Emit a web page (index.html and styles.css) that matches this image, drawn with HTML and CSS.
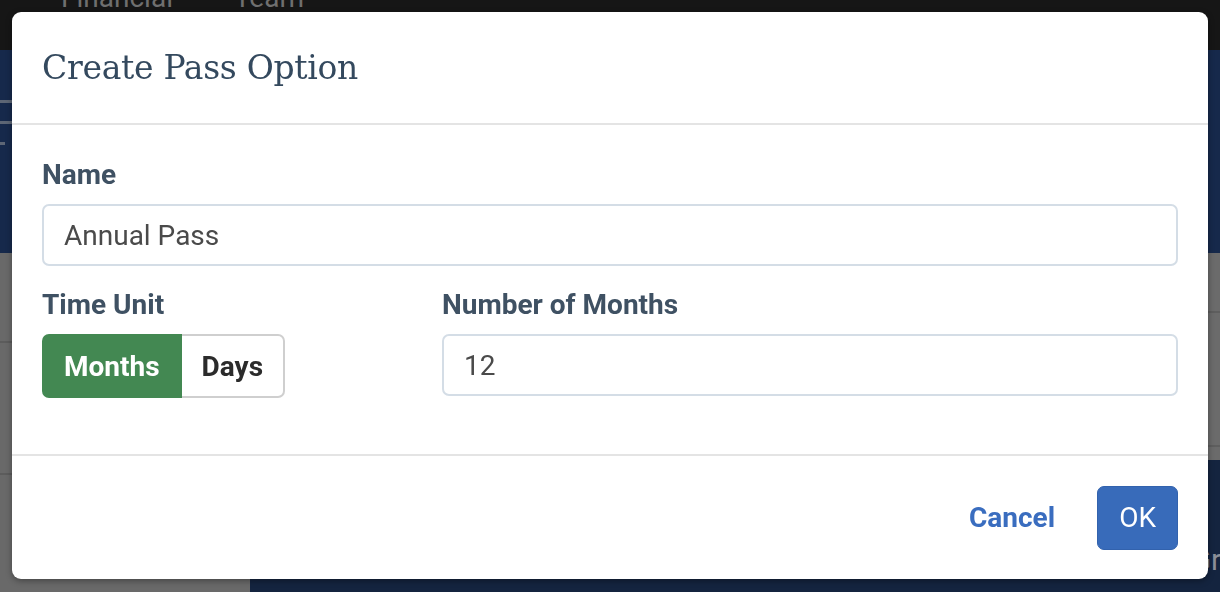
FILE: index.html
```html
<!DOCTYPE html>
<html lang="en">
<head>
<meta charset="utf-8">
<title>Create Pass Option</title>
<link rel="stylesheet" href="styles.css">
</head>
<body>
<div class="page">
  <div class="topbar">
    <span class="nav-item">Financial</span>
    <span class="nav-item">Team</span>
  </div>
  <div class="hero">
    <div class="hero-lines">
      <span class="hero-line"></span>
      <span class="hero-line"></span>
      <span class="hero-line short"></span>
    </div>
  </div>
  <div class="main">
    <div class="sidebar">
      <div class="side-row"></div>
      <div class="side-row"></div>
    </div>
    <div class="content">
      <div class="content-gray">
        <div class="content-row"></div>
        <div class="content-row"></div>
      </div>
      <div class="content-navy">
        <span class="navy-title">Gra</span>
      </div>
    </div>
  </div>
</div>

<div class="overlay">
  <div class="modal">
    <div class="modal-header">
      <h1 class="modal-title">Create Pass Option</h1>
    </div>
    <div class="modal-body">
      <div class="field">
        <label class="label">Name</label>
        <div class="input">Annual Pass</div>
      </div>
      <div class="row">
        <div class="field">
          <label class="label">Time Unit</label>
          <div class="btn-group">
            <span class="seg seg-active">Months</span>
            <span class="seg">Days</span>
          </div>
        </div>
        <div class="field">
          <label class="label">Number of Months</label>
          <div class="input input-num">12</div>
        </div>
      </div>
    </div>
    <div class="modal-footer">
      <span class="btn-link">Cancel</span>
      <span class="btn-primary">OK</span>
    </div>
  </div>
</div>
</body>
</html>
```

FILE: styles.css
```css
* { box-sizing: border-box; }
html, body { margin: 0; padding: 0; }
body {
  width: 1220px;
  height: 592px;
  overflow: hidden;
  font-family: Roboto, "Liberation Sans", Arial, sans-serif;
  background: #6a6a6a;
}

/* background page (dimmed) */
.page {
  display: flex;
  flex-direction: column;
  height: 592px;
}
.topbar {
  height: 50px;
  background: #161616;
  display: flex;
  align-items: flex-start;
  gap: 61px;
  padding-left: 61px;
  overflow: hidden;
}
.nav-item {
  color: #6f6f6f;
  font-size: 28px;
  line-height: 28px;
  margin-top: -16px;
}
.hero {
  height: 203px;
  background: #16294b;
  padding-top: 50px;
}
.hero-lines {
  display: flex;
  flex-direction: column;
  gap: 18px;
}
.hero-line {
  display: block;
  width: 20px;
  height: 3px;
  background: #5d6675;
}
.hero-line.short { width: 5px; }
.main {
  flex: 1;
  display: flex;
}
.sidebar {
  width: 250px;
  background: #696969;
  padding-top: 88px;
  display: flex;
  flex-direction: column;
  gap: 130px;
}
.side-row {
  height: 2px;
  background: #5c5c5c;
}
.content {
  flex: 1;
  display: flex;
  flex-direction: column;
}
.content-gray {
  height: 207px;
  background: #6b6b6b;
  border-left: 2px solid #5d5d5d;
  padding-top: 58px;
  display: flex;
  flex-direction: column;
  gap: 132px;
}
.content-row {
  height: 2px;
  background: #5e5e5e;
}
.content-navy {
  flex: 1;
  background: #14243f;
  display: flex;
  justify-content: flex-end;
  align-items: flex-start;
  padding-top: 82px;
  overflow: hidden;
}
.navy-title {
  color: #8a8f98;
  font-size: 30px;
  margin-right: -17px;
}

/* modal */
.overlay {
  position: fixed;
  inset: 0;
  padding: 12px 12px 13px;
  display: flex;
}
.modal {
  flex: 1;
  background: #ffffff;
  border-radius: 9px;
  box-shadow: 0 2px 6px rgba(0,0,0,0.35);
  display: flex;
  flex-direction: column;
}
.modal-header {
  height: 113px;
  border-bottom: 2px solid #e4e4e4;
  padding: 0 30px;
  display: flex;
  align-items: center;
}
.modal-title {
  margin: 0;
  font-family: "DejaVu Serif", "Liberation Serif", serif;
  font-weight: normal;
  font-size: 33px;
  color: #34495e;
  letter-spacing: -0.3px;
}
.modal-body {
  flex: 1;
  padding: 36px 30px 0;
  display: flex;
  flex-direction: column;
  gap: 25px;
}
.field {
  display: flex;
  flex-direction: column;
  gap: 15px;
}
.label {
  font-size: 28px;
  line-height: 28px;
  font-weight: bold;
  color: #3f5163;
}
.input {
  height: 62px;
  border: 2px solid #d4dde6;
  border-radius: 7px;
  padding: 0 20px;
  display: flex;
  align-items: center;
  font-size: 28px;
  color: #4a4a4a;
}
.row {
  display: grid;
  grid-template-columns: 400px 1fr;
}
.btn-group {
  display: flex;
  height: 64px;
}
.seg {
  display: flex;
  align-items: center;
  padding: 0 20px 0 20px;
  font-size: 28px;
  font-weight: bold;
  color: #2b2b2b;
  border: 2px solid #cfcfcf;
  border-left: none;
  border-radius: 0 7px 7px 0;
}
.seg-active {
  background: #438852;
  color: #ffffff;
  border: none;
  border-radius: 7px 0 0 7px;
  padding: 0 22px;
}
.modal-footer {
  height: 125px;
  border-top: 2px solid #e4e4e4;
  padding: 0 30px 0;
  display: flex;
  align-items: center;
  justify-content: flex-end;
  gap: 42px;
}
.btn-link {
  font-size: 28px;
  font-weight: bold;
  color: #3a6dbf;
}
.btn-primary {
  height: 64px;
  padding: 0 21px;
  background: #386bba;
  border: 1px solid #3262ad;
  border-radius: 7px;
  color: #ffffff;
  font-size: 28px;
  display: flex;
  align-items: center;
}
```
